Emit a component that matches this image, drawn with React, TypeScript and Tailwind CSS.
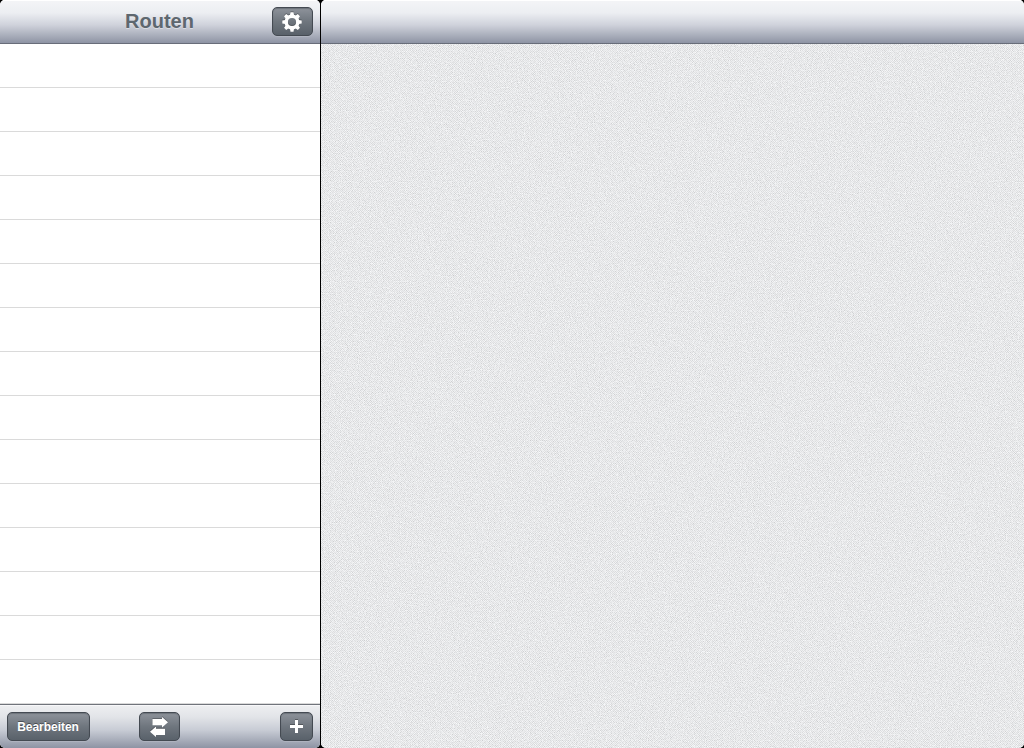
import type { ReactNode } from "react";

const ROWS = Array.from({ length: 15 }, (_, i) => i);

function BarButton({ label, className, children }: { label: string; className: string; children: ReactNode }) {
  return (
    <button
      type="button"
      aria-label={label}
      className={`flex h-[29px] items-center justify-center rounded-[5px] border border-[#444a52] bg-linear-to-b from-[#8e939b] via-[#6f767e] to-[#59616a] text-white shadow-[0_1px_0_rgba(255,255,255,0.12),inset_0_1px_1px_rgba(40,45,52,0.3)] ${className}`}
    >
      {children}
    </button>
  );
}

function GearIcon() {
  return (
    <svg width="20" height="20" viewBox="-10 -10 20 20" fill="none" stroke="white" className="mr-px drop-shadow-[0_-1px_0_rgba(0,0,0,0.25)]">
      <circle r="5.8" strokeWidth="3.4" />
      {[0, 45, 90, 135, 180, 225, 270, 315].map((angle) => (
        <path key={angle} d="M-2.1 -6.5L-1.5 -9.7H1.5L2.1 -6.5Z" fill="white" stroke="none" transform={`rotate(${angle})`} />
      ))}
    </svg>
  );
}

function SwapIcon() {
  return (
    <svg width="20" height="20" viewBox="0 0 20 20" fill="white" className="mr-px drop-shadow-[0_-1px_0_rgba(0,0,0,0.25)]">
      <path d="M3.5 2H13V0L19 5.2L13 10.4V8.3H3.5Z" />
      <path d="M16 11.7H7V9.6L1 14.8L7 20V18H16Z" />
    </svg>
  );
}

function PlusIcon() {
  return (
    <svg width="13" height="13" viewBox="0 0 13 13" fill="white" className="drop-shadow-[0_-1px_0_rgba(0,0,0,0.3)]">
      <path d="M5 0H8V5H13V8H8V13H5V8H0V5H5Z" />
    </svg>
  );
}

function LinenTexture() {
  return (
    <svg className="absolute inset-0 h-full w-full" aria-hidden="true">
      <defs>
        <filter id="grain" x="0" y="0" width="100%" height="100%" colorInterpolationFilters="sRGB">
          <feTurbulence type="fractalNoise" baseFrequency="0.83" numOctaves="2" seed="8" />
          <feColorMatrix values="0.24 0 0 0 0.777  0.24 0 0 0 0.782  0.24 0 0 0 0.79  0 0 0 0 1" />
        </filter>
        <pattern id="weave" width="2" height="2" patternUnits="userSpaceOnUse">
          <path d="M0 0h1v1H0zM1 1h1v1H1z" fill="#fff" fillOpacity="0.4" shapeRendering="crispEdges" />
          <path d="M1 0h1v1H1zM0 1h1v1H0z" fill="#70767c" fillOpacity="0.06" shapeRendering="crispEdges" />
        </pattern>
      </defs>
      <rect width="100%" height="100%" filter="url(#grain)" />
      <rect width="100%" height="100%" fill="url(#weave)" />
    </svg>
  );
}

export default function App() {
  return (
    <div className="flex h-[748px] w-[1024px] gap-px overflow-hidden bg-black font-['Liberation_Sans',Arial,sans-serif]">
      <aside className="flex w-80 shrink-0 flex-col overflow-hidden rounded-[5px] bg-white">
        <header className="grid h-11 shrink-0 grid-cols-[1fr_auto_1fr] items-center border-b border-[#686d79] bg-[linear-gradient(#f4f5f7,#eceef2_30%,#cfd2db_58%,#8e94a4)] px-[7px] shadow-[inset_0_1px_0_#fff]">
          <h1 className="col-start-2 pr-px pb-0.5 text-[20px] leading-6 font-bold text-[#5e676f] [text-shadow:0_1px_0_rgba(255,255,255,0.4)]">Routen</h1>
          <BarButton label="Einstellungen" className="w-[41px] justify-self-end">
            <GearIcon />
          </BarButton>
        </header>
        <ul className="min-h-0 flex-1 overflow-hidden">
          {ROWS.map((row) => (
            <li key={row} className="h-11 border-b border-[#dadada]" />
          ))}
        </ul>
        <footer className="grid h-11 shrink-0 grid-cols-[132px_41px_1fr] items-center border-t border-[#70747b] bg-[linear-gradient(#eeeff1,#e2e4e8_28%,#c8ccd5_58%,#8e94a4)] px-[7px] shadow-[inset_0_1px_0_#f8f8fa]">
          <BarButton label="Bearbeiten" className="w-[83px]">
            <span className="pr-px text-[12px] leading-4 font-bold tracking-[-0.03px] [text-shadow:0_-1px_0_rgba(0,0,0,0.4)]">Bearbeiten</span>
          </BarButton>
          <BarButton label="Tauschen" className="w-[41px]">
            <SwapIcon />
          </BarButton>
          <BarButton label="Hinzufügen" className="w-[33px] justify-self-end">
            <PlusIcon />
          </BarButton>
        </footer>
      </aside>
      <main className="flex min-w-0 flex-1 flex-col overflow-hidden rounded-[5px] bg-[#e5e7e9]">
        <header className="h-11 shrink-0 border-b border-[#686d79] bg-[linear-gradient(#f4f5f7,#eceef2_30%,#cfd2db_58%,#8e94a4)] shadow-[inset_0_1px_0_#fff]" />
        <section className="relative flex-1">
          <LinenTexture />
        </section>
      </main>
    </div>
  );
}
